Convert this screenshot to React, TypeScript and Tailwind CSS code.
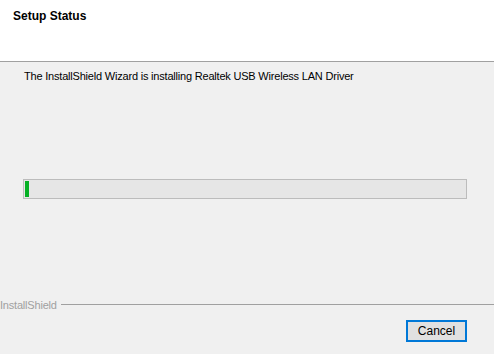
export default function App() {
  return (
    <div
      className="w-[494px] h-[354px] flex flex-col bg-[#f0f0f0] overflow-hidden text-[11px] tracking-[-0.2px] text-black"
      style={{ fontFamily: '"Liberation Sans", Arial, sans-serif' }}
    >
      <div className="h-[62px] bg-white border-b border-[#a0a0a0] pl-[13px] pt-[7px]">
        <div className="font-bold text-[12px] tracking-normal">Setup Status</div>
      </div>

      <div className="pl-[24px] pt-[6px]">The InstallShield Wizard is installing Realtek USB Wireless LAN Driver</div>

      <div className="ml-[23px] mt-[94px] w-[444px] h-[20px] border border-[#bcbcbc] bg-[#e6e6e6] p-[1px]">
        <div className="h-full w-[4px] bg-[#06b025]" />
      </div>

      <div className="mt-[98px] flex items-center">
        <span className="text-[#a0a0a0] pr-[4px]">InstallShield</span>
        <div className="flex-1 h-px bg-[#a0a0a0]" />
      </div>

      <div className="flex justify-end pr-[27px] mt-[7px]">
        <button className="w-[61px] h-[22px] bg-[#e1e1e1] border-2 border-[#0078d7] text-[12px] tracking-normal leading-none">
          Cancel
        </button>
      </div>
    </div>
  );
}
